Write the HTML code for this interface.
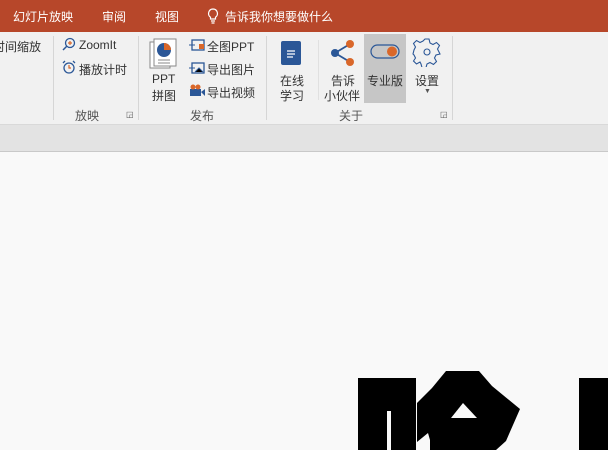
<!DOCTYPE html>
<html><head><meta charset="utf-8"><style>
*{margin:0;padding:0;box-sizing:border-box}
body{width:608px;height:450px;overflow:hidden;background:#f9f9f9;font-family:"Liberation Sans","Noto Sans CJK SC",sans-serif;font-size:12px;color:#333;position:relative}
.t{position:absolute;white-space:nowrap}
#bar{position:absolute;left:0;top:0;width:608px;height:32px;background:#b7472a;color:#fff;font-size:12px}
#bar .t{top:8px;color:#fff}
#rib{position:absolute;left:0;top:32px;width:608px;height:92px;background:#f1f1f1}
.sep{position:absolute;top:36px;width:1px;height:84px;background:#d6d6d6}
#band{position:absolute;left:0;top:124px;width:608px;height:28px;background:#e3e3e3;border-top:1px solid #d9d9d9;border-bottom:1px solid #c9c9c9}
.g{color:#555}
</style></head><body>
<div id="bar">
<span class="t" style="left:13px">幻灯片放映</span>
<span class="t" style="left:102px">审阅</span>
<span class="t" style="left:155px">视图</span>
<svg class="t" style="left:207px;top:8px" width="12" height="16" viewBox="0 0 12 16"><path d="M6 1a4.5 4.5 0 0 0-2.5 8.2V11h5V9.2A4.5 4.5 0 0 0 6 1zM4 13h4M4.5 15h3" fill="none" stroke="#fff" stroke-width="1.2"/></svg>
<span class="t" style="left:225px">告诉我你想要做什么</span>
</div>
<div id="rib"></div>
<div class="sep" style="left:53px"></div>
<div class="sep" style="left:138px"></div>
<div class="sep" style="left:266px"></div>
<div class="sep" style="left:452px"></div>
<div class="sep" style="left:318px;top:40px;height:60px;background:#e0e0e0"></div>

<span class="t" style="left:-7px;top:38px">时间缩放</span>
<svg class="t" style="left:62px;top:37px" width="14" height="14" viewBox="0 0 14 14"><circle cx="8" cy="6" r="4.5" fill="none" stroke="#2b5797" stroke-width="1.3"/><path d="M6 6h4M8 4v4" stroke="#d9672a" stroke-width="1.2"/><path d="M5 9L1 13" stroke="#2b5797" stroke-width="1.5"/></svg>
<span class="t" style="left:79px;top:38px">ZoomIt</span>
<svg class="t" style="left:62px;top:60px" width="14" height="14" viewBox="0 0 14 14"><circle cx="7" cy="8" r="5" fill="none" stroke="#2b5797" stroke-width="1.3"/><path d="M7 5v3h2" stroke="#d9672a" stroke-width="1.2" fill="none"/><path d="M1 3l2-2M13 3l-2-2" stroke="#2b5797" stroke-width="1.3"/></svg>
<span class="t" style="left:79px;top:61px">播放计时</span>
<span class="t g" style="left:75px;top:107px">放映</span>
<span class="t g" style="left:126px;top:110px;font-size:8px">◲</span>

<svg class="t" style="left:149px;top:38px" width="30" height="32" viewBox="0 0 30 32"><rect x="1" y="4" width="20" height="26" fill="#fff" stroke="#888"/><rect x="5" y="1" width="22" height="27" fill="#fff" stroke="#888"/><circle cx="15" cy="12" r="7" fill="#2b5797"/><path d="M15 12V5a7 7 0 0 1 7 7z" fill="#d9672a"/><path d="M9 22h12M9 25h12" stroke="#888"/></svg>
<span class="t" style="left:152px;top:72px">PPT</span>
<span class="t" style="left:152px;top:87px">拼图</span>
<svg class="t" style="left:189px;top:39px" width="16" height="12"><rect x="3" y="1" width="12" height="10" fill="none" stroke="#2b5797" stroke-width="1.3"/><path d="M0 6h6" stroke="#2b5797"/><rect x="10" y="5" width="5" height="5" fill="#d9672a"/></svg>
<span class="t" style="left:207px;top:38px">全图PPT</span>
<svg class="t" style="left:189px;top:62px" width="16" height="12"><rect x="3" y="1" width="12" height="10" fill="none" stroke="#2b5797" stroke-width="1.3"/><path d="M0 6h6M6 10l4-4 4 4" stroke="#2b5797"/></svg>
<span class="t" style="left:207px;top:61px">导出图片</span>
<svg class="t" style="left:189px;top:84px" width="16" height="12"><rect x="1" y="5" width="11" height="7" fill="#2b5797"/><path d="M12 8l4-3v7z" fill="#2b5797"/><circle cx="4" cy="3" r="2.5" fill="#d9672a"/><circle cx="9" cy="3" r="2.5" fill="#d9672a"/></svg>
<span class="t" style="left:207px;top:84px">导出视频</span>
<span class="t g" style="left:190px;top:107px">发布</span>

<svg class="t" style="left:280px;top:40px" width="22" height="26"><rect x="1" y="1" width="20" height="24" rx="2" fill="#2b5797"/><path d="M7 11h8M7 14h8M7 17h6" stroke="#fff" stroke-width="1.2"/></svg>
<span class="t" style="left:280px;top:72px">在线</span>
<span class="t" style="left:280px;top:87px">学习</span>
<svg class="t" style="left:328px;top:40px" width="30" height="26"><path d="M7 13L22 4M7 13l15 9" stroke="#2b5797" stroke-width="1.8"/><circle cx="7" cy="13" r="4" fill="#2b5797"/><circle cx="22" cy="4" r="4" fill="#d9672a"/><circle cx="22" cy="22" r="4" fill="#d9672a"/></svg>
<span class="t" style="left:331px;top:72px">告诉</span>
<span class="t" style="left:324px;top:87px">小伙伴</span>
<div class="t" style="left:364px;top:34px;width:42px;height:69px;background:#c6c6c6"></div>
<svg class="t" style="left:370px;top:44px" width="30" height="16"><rect x="1" y="1" width="28" height="13" rx="6.5" fill="none" stroke="#2b5797" stroke-width="1.2"/><circle cx="22" cy="7.5" r="5" fill="#d9672a"/></svg>
<span class="t" style="left:367px;top:72px">专业版</span>
<svg class="t" style="left:412px;top:37px" width="30" height="30" viewBox="0 0 30 30"><path d="M13 2h4l1 4 3 1.5 3.5-2 3 3-2 3.5L27 15l1 2-4 1-1.5 3 2 3.5-3 3-3.5-2-3 1.5-1 3.5h-4l-1-3.5L8 25l-3.5 2-3-3L3.5 21 2 18l-1-1 1-4 1.5-3-2-3.5 3-3L8 5.5 11 4z" fill="none" stroke="#2b5797" stroke-width="1.1"/><circle cx="15" cy="15" r="3" fill="none" stroke="#2b5797" stroke-width="1.1"/></svg>
<span class="t" style="left:415px;top:72px">设置</span>
<span class="t g" style="left:424px;top:88px;font-size:7px">▼</span>
<span class="t g" style="left:339px;top:107px">关于</span>
<span class="t g" style="left:440px;top:110px;font-size:8px">◲</span>

<div id="band"></div>

<svg style="position:absolute;left:0;top:0" width="608" height="450">
<path d="M358 378H416V450H391V411H387V450H358Z" fill="#000"/>
<path d="M446 371H479L492 386L520 409L506 441L496 450H430V440L428 433L417 442V403L432 388Z" fill="#000"/>
<path d="M463 403L477 418H451Z" fill="#f9f9f9"/>
<path d="M579 378H608V450H579Z" fill="#000"/>
</svg>
</body></html>
